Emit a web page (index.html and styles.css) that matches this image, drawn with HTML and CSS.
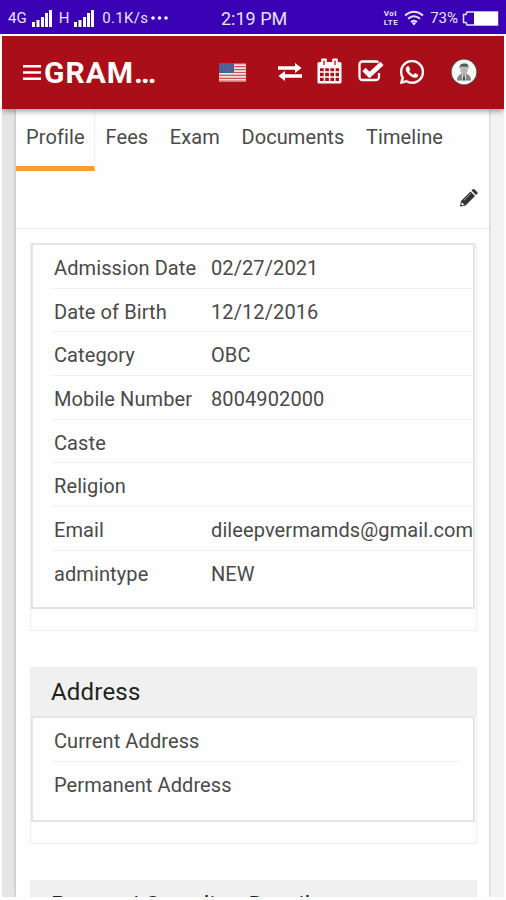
FILE: index.html
```html
<!DOCTYPE html>
<html lang="en">
<head>
    <meta charset="UTF-8">
    <title>Student Profile</title>
    <meta name="viewport" content="width=device-width, initial-scale=1.0">
    <link rel="stylesheet" href="styles.css">
</head>
<body>
    <div class="status-bar">
        <div class="status-left">
            <span>4G</span>
            <svg class="signal" width="21" height="17" viewBox="0 0 21 17"><path d="M0 12h3v5H0zM4.500 10h3v7h-3zM9 7h3v10H9zM13 3h3v14h-3zM17 0h3v17h-3z"/></svg>
            <span class="net">H</span>
            <svg class="signal" width="21" height="17" viewBox="0 0 21 17"><path d="M0 12h3v5H0zM4.500 10h3v7h-3zM9 7h3v10H9zM13 3h3v14h-3zM17 0h3v17h-3z"/></svg>
            <span class="speed">0.1K/s</span>
            <svg class="more" width="17" height="4" viewBox="0 0 17 4"><circle cx="2" cy="2" r="1.8"/><circle cx="8.5" cy="2" r="1.8"/><circle cx="15" cy="2" r="1.8"/></svg>
        </div>
        <div class="clock">2:19 PM</div>
        <div class="status-right">
            <span class="volte"><span>VoI</span><span>LTE</span></span>
            <svg class="wifi" width="20" height="16" viewBox="0 0 20 16"><path d="M1 5.500Q10-2 19 5.500M4 8.800q6-5 12 0M7 12q3-2.600 6 0" fill="none" stroke="#e9e2fb" stroke-width="2"/><path d="M7.600 12.600h4.800L10 15.500z"/></svg>
            <span class="percent">73%</span>
            <svg class="battery" width="37" height="15" viewBox="0 0 37 15"><path d="M5 1h30.500v13H5l-1-2.500H1.500v-8H4z" fill="none" stroke="#e9e2fb" stroke-width="1.500"/><path d="M12 1h24v13H12z" fill="#fff"/></svg>
        </div>
    </div>

    <div class="screen">
        <header class="navbar">
            <svg class="menu" width="18" height="16" viewBox="0 0 18 16"><path d="M0 0h18v2.600H0zM0 6.200h18v2.600H0zM0 12.400h18V15H0z"/></svg>
            <h1>GRAM…</h1>
            <nav class="nav-icons">
                <svg class="flag" width="27" height="19" viewBox="0 0 27 19">
                    <path d="M0 0h27v19H0z" fill="#f0e0e0"/>
                    <path d="M0 .7h27M0 3.700h27M0 6.600h27M0 9.500h27M0 12.400h27M0 15.300h27M0 18.200h27" stroke="#cc5a60" stroke-width="1.200"/>
                    <path d="M0 0h15v10H0z" fill="#4b6090"/>
                    <path d="M1.500 2h13M1.500 4.500h13M1.500 7h13" stroke="#6c7a9c" stroke-width=".8" stroke-dasharray="1 1.500"/>
                </svg>
                <svg class="exchange" width="24" height="18" viewBox="0 0 24 18"><path d="M0 3.200h17V0l6.500 5-6.500 5V6.700H0zM24 11.300H7V8l-6.500 5L7 18v-3.200h17z"/></svg>
                <svg class="calendar" width="25" height="26" viewBox="0 0 25 26">
                    <rect x="0.500" y="4" width="24" height="21.500" rx="1.500"/>
                    <path d="M5.200 1.500h3.600v6H5.200zM16.200 1.500h3.600v6h-3.600z" stroke="#fff" stroke-width="2" stroke-linejoin="round"/>
                    <path d="M7 2.500v4.500M18 2.500v4.500" stroke="#aa0f19" stroke-width="1.300"/>
                    <path d="M3 10.200h3.700v3H3zM8.200 10.200h3.700v3H8.200zM13.400 10.200h3.700v3h-3.700zM18.600 10.200H22v3h-3.400zM3 14.700h3.700v3.600H3zM8.200 14.700h3.700v3.600H8.200zM13.400 14.700h3.700v3.600h-3.700zM18.600 14.700H22v3.600h-3.400zM3 19.800h3.700V23H3zM8.200 19.800h3.700V23H8.200zM13.400 19.800h3.700V23h-3.700zM18.600 19.800H22V23h-3.400z" fill="#aa0f19"/>
                </svg>
                <svg class="check" width="26" height="22" viewBox="0 0 26 22"><path d="M20.500 2.300Q19.500 1.500 18 1.500H4.500a3 3 0 0 0-3 3v12.500a3 3 0 0 0 3 3h13.500a3 3 0 0 0 3-3v-4" fill="none" stroke="#fff" stroke-width="2.300"/><path d="M6 9.500l5.500 5.500L24 3.500" fill="none" stroke="#fff" stroke-width="4.600"/></svg>
                <svg class="whatsapp" width="24" height="24" viewBox="0 32 448 448"><path d="M380.9 97.1C339 55.1 283.2 32 223.9 32c-122.400 0-222 99.600-222 222 0 39.100 10.200 77.300 29.600 111L0 480l117.700-30.900c32.400 17.700 68.900 27 106.100 27h.1c122.300 0 224.100-99.600 224.100-222 0-59.300-25.200-115-67.100-157zm-157 341.600c-33.200 0-65.700-8.900-94-25.700l-6.700-4-69.800 18.300L72 359.200l-4.400-7c-18.500-29.400-28.200-63.300-28.200-98.200 0-101.700 82.800-184.500 184.600-184.500 49.300 0 95.600 19.200 130.400 54.100 34.800 34.900 56.200 81.200 56.100 130.500 0 101.800-84.900 184.600-186.600 184.600zm101.200-138.200c-5.500-2.800-32.800-16.200-37.900-18-5.100-1.900-8.800-2.800-12.500 2.800-3.700 5.600-14.300 18-17.600 21.800-3.200 3.700-6.500 4.200-12 1.400-32.600-16.300-54-29.100-75.500-66-5.700-9.800 5.700-9.100 16.300-30.300 1.800-3.700.9-6.900-.5-9.700-1.400-2.800-12.500-30.100-17.100-41.200-4.500-10.800-9.100-9.300-12.500-9.500-3.200-.2-6.900-.2-10.600-.2-3.700 0-9.700 1.400-14.800 6.900-5.100 5.600-19.400 19-19.400 46.300 0 27.300 19.900 53.700 22.600 57.400 2.800 3.700 39.100 59.700 94.800 83.800 35.200 15.200 49 16.500 66.600 13.900 10.700-1.600 32.800-13.400 37.400-26.400 4.600-13 4.600-24.100 3.200-26.400-1.300-2.500-5-3.900-10.500-6.600z" stroke="#fff" stroke-width="8"/></svg>
                <svg class="avatar" width="28" height="28" viewBox="0 0 28 28">
                    <circle cx="14" cy="14" r="13" fill="#f7f7f5" stroke="#5c3436" stroke-width="1.200"/>
                    <path d="M7 22.500q0-5.500 4.500-6.500h5q4.500 1 4.500 6.500z" fill="#858887"/>
                    <path d="M12 16l2 2 2-2v6.500h-4z" fill="#dedede"/>
                    <path d="M13.300 18h1.400l.6 4.500h-2.600z" fill="#4a4d4e"/>
                    <path d="M10.300 8h7.400v4.500q-1 4-3.700 4t-3.700-4z" fill="#b5b6b5"/>
                    <path d="M9.600 10.500Q9 5.500 14 5.500q5-.8 4.600 5l-1.200-2h-6.600z" fill="#515657"/>
                </svg>
            </nav>
        </header>

        <main class="content">
            <ul class="tabs">
                <li class="active">Profile</li>
                <li>Fees</li>
                <li>Exam</li>
                <li>Documents</li>
                <li>Timeline</li>
            </ul>
            <div class="tools">
                <svg class="pencil" width="18" height="18" viewBox="0 0 18 18"><path d="M0 17.500l1-5.500L10.500 2.500l4.500 4.500L5.500 16.500zM11.500 1.500l1.300-1.200q.8-.6 1.600 0l3 3q.6.8 0 1.500L16 6z" fill="#333"/><path d="M1.700 13.200l2.700 2.600-2.200.5-.9-.9z" fill="#fff"/><path d="M4 11.200l7-6.900" stroke="#aaa" stroke-width=".9"/></svg>
            </div>

            <section class="panel">
                <dl class="info">
                    <div class="row"><dt>Admission Date</dt><dd>02/27/2021</dd></div>
                    <div class="row"><dt>Date of Birth</dt><dd>12/12/2016</dd></div>
                    <div class="row"><dt>Category</dt><dd>OBC</dd></div>
                    <div class="row"><dt>Mobile Number</dt><dd>8004902000</dd></div>
                    <div class="row"><dt>Caste</dt><dd></dd></div>
                    <div class="row"><dt>Religion</dt><dd></dd></div>
                    <div class="row"><dt>Email</dt><dd>dileepvermamds@gmail.com</dd></div>
                    <div class="row"><dt>admintype</dt><dd>NEW</dd></div>
                </dl>
            </section>

            <section class="panel">
                <h2>Address</h2>
                <dl class="info address">
                    <div class="row"><dt>Current Address</dt></div>
                    <div class="row"><dt>Permanent Address</dt></div>
                </dl>
            </section>

            <section class="panel">
                <h2>Parent / Guardian Details</h2>
            </section>
        </main>
    </div>
</body>
</html>
```
FILE: styles.css
```css
* {
    box-sizing: border-box;
}
body {
    margin: 0;
    height: 900px;
    overflow: hidden;
    background: #fdfdfd;
    font-family: Roboto, "Liberation Sans", sans-serif;
    color: #4a4a4a;
}
svg {
    display: block;
    flex: none;
    fill: #fff;
}

/* phone status bar */
.status-bar {
    height: 34px;
    padding: 2px 7px 0 8px;
    background: #3a00b4;
    color: #e9e2fb;
    display: grid;
    grid-template-columns: 213px 100px 1fr;
    align-items: center;
    font-size: 15px;
    white-space: nowrap;
}
.status-left,
.status-right {
    display: flex;
    align-items: center;
}
.status-right {
    justify-content: flex-end;
}
.signal {
    margin-left: 5px;
}
.net {
    margin-left: 6px;
}
.speed {
    margin-left: 7px;
    letter-spacing: 0.3px;
}
.more {
    margin-left: 3px;
}
.clock {
    font-size: 18px;
}
.volte {
    display: flex;
    flex-direction: column;
    font-size: 8px;
    line-height: 9px;
    letter-spacing: 0.5px;
    font-weight: bold;
}
.wifi {
    margin-left: 6px;
}
.percent {
    margin-left: 6px;
}
.battery {
    margin-left: 4px;
}

/* app */
.screen {
    height: 861px;
    margin: 2px 2px 0;
    overflow: hidden;
    background: linear-gradient(to right, #e5e5e5 50%, #f3f3f3 50%);
}
.navbar {
    position: relative;
    height: 73px;
    padding-left: 21px;
    display: flex;
    align-items: center;
    background: #aa0f19;
    box-shadow: 0 2px 6px rgba(0, 0, 0, 0.4);
}
h1 {
    margin: -1px 0 0 3px;
    width: 175px;
    font-size: 30px;
    font-weight: bold;
    letter-spacing: 1px;
    color: #fff;
}
.nav-icons {
    display: flex;
    align-items: center;
}
.exchange {
    margin: -1px 0 0 32px;
}
.calendar {
    margin: -4px 0 0 15px;
}
.check {
    margin: -3px 0 0 16px;
}
.whatsapp {
    margin: -2px 0 0 16px;
}
.avatar {
    margin: -2px 0 0 26px;
}

.content {
    margin: 0 15px 0 14px;
    height: 788px;
    background: #fefefe;
    box-shadow: 0 0 3px rgba(0, 0, 0, 0.25);
}
.tabs {
    list-style: none;
    margin: 0;
    padding: 0;
    display: flex;
    height: 62px;
    font-size: 20px;
    letter-spacing: 0.1px;
}
.tabs li {
    padding: 16px 11px 0 10.5px;
}
.tabs .active {
    width: 79px;
    padding-left: 10px;
    border-right: 1px solid #f2f2f2;
    border-bottom: 5px solid #f2a22b;
}
.tools {
    height: 58px;
    padding: 18px 11px 0 0;
    display: flex;
    justify-content: flex-end;
    border-bottom: 1px solid #efefef;
}

.panel {
    margin: 14px 12px 36px 14px;
    border: 1px solid #eee;
    border-top: none;
    padding-bottom: 21px;
}
.panel h2 {
    margin: 0;
    height: 49px;
    padding-left: 20px;
    line-height: 50px;
    font-size: 24px;
    font-weight: normal;
    letter-spacing: 0.2px;
    color: #222;
    background: #f0f0f0;
}
.info {
    margin: 0 1px 0 0;
    height: 366px;
    padding-left: 18px;
    border: 2px solid #e3e5e5;
    font-size: 20px;
    letter-spacing: 0.1px;
}
.row {
    display: flex;
    height: 43.7px;
    line-height: 47px;
    padding-left: 3px;
    border-bottom: 1px solid #f1f1f1;
    white-space: nowrap;
}
.row:last-child {
    border-bottom: none;
}
.row dt {
    flex: none;
    width: 157px;
}
.row dd {
    margin: 0;
}
.address {
    height: 106px;
    padding-right: 14px;
}
.panel + .panel {
    margin-top: 0;
}
```
